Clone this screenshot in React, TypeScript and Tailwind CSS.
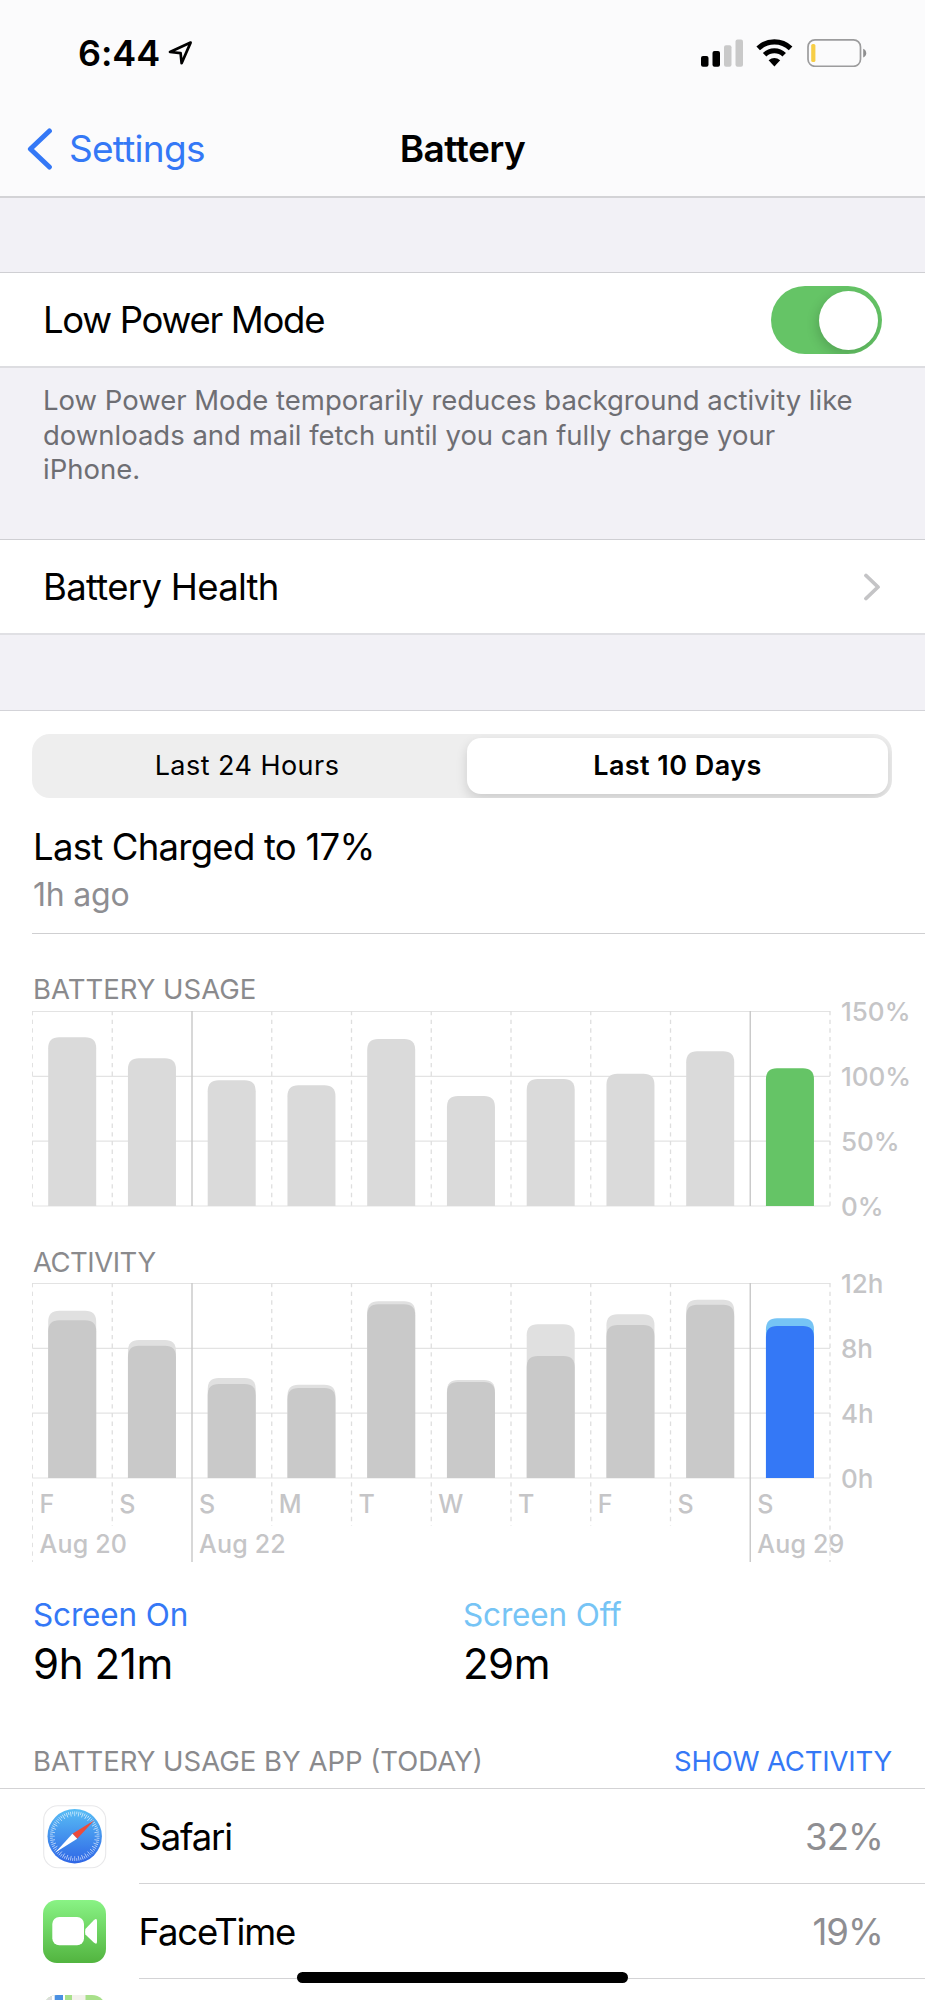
import type { ReactNode } from "react";

type Day = { label: string; date?: string; usage: number; total: number; on: number };

// usage, total and on are bar heights inside the 195px plot
const days: Day[] = [
  { label: "F", date: "Aug 20", usage: 168.7, total: 167.3, on: 157.7 },
  { label: "S", usage: 147.7, total: 138, on: 132.3 },
  { label: "S", date: "Aug 22", usage: 125.7, total: 100, on: 94 },
  { label: "M", usage: 120.7, total: 93.3, on: 90 },
  { label: "T", usage: 167, total: 176.7, on: 173.7 },
  { label: "W", usage: 110, total: 98, on: 96 },
  { label: "T", usage: 127, total: 153.7, on: 122 },
  { label: "F", usage: 132.3, total: 163.7, on: 153 },
  { label: "S", usage: 154.7, total: 178.3, on: 173.3 },
  { label: "S", date: "Aug 29", usage: 137.7, total: 159.7, on: 152 },
];

const PLOT = 194.5;
const STEP = 79.75;

function barPath(i: number, height: number) {
  const x = i * STEP + 16.2;
  const w = 48;
  const y = PLOT + 0.5 - height;
  return `M${x} ${PLOT + 0.5}V${y + 11}Q${x} ${y} ${x + 11} ${y}H${x + w - 11}Q${x + w} ${y} ${x + w} ${y + 11}V${PLOT + 0.5}Z`;
}

function Plot({ height, dayEnd, weekEnd, children }: { height: number; dayEnd: number; weekEnd: number; children: ReactNode }) {
  return (
    <svg className="block" width="800" height={height} viewBox={`0 0 800 ${height}`} fill="none">
      {[0, 1, 2, 3].map((n) => (
        <path key={n} d={`M0.3 ${0.5 + (n * PLOT) / 3}H798`} stroke="#e3e3e3" strokeWidth="1.2" />
      ))}
      {Array.from({ length: 11 }, (_, i) => {
        const x = i * STEP + 0.5;
        const week = i === 2 || i === 9;
        const end = week || i === 0 || i === 10 ? weekEnd : dayEnd;
        return week ? (
          <path key={i} d={`M${x} 0V${end}`} stroke="#c8c8c8" strokeWidth="1.4" />
        ) : (
          <path key={i} d={`M${x} 0V${end}`} stroke="#dedede" strokeWidth={i === 0 ? 0.9 : 1.3} strokeDasharray="4.33 4.33" />
        );
      })}
      {children}
    </svg>
  );
}

function Axis({ labels }: { labels: string[] }) {
  return (
    <div className="-mt-[14px] ml-[9px] flex h-[225px] flex-col justify-between">
      {labels.map((l) => (
        <span key={l} className="h-[30px] text-[26px] leading-[30px] font-medium whitespace-nowrap text-[#c5c5c7]">{l}</span>
      ))}
    </div>
  );
}

function StatusBar() {
  return (
    <div className="flex h-[105px] items-center pr-[58px] pl-[78px]">
      <span className="text-[36px] leading-[44px] font-semibold tracking-[-0.1px]">6:44</span>
      <svg className="ml-[8px]" width="25" height="26" viewBox="0 0 25 26" fill="none">
        <path d="M22.6 2.6L2 12L12.6 13.2L13.6 23.2Z" stroke="#000" strokeWidth="2.7" strokeLinejoin="round" />
      </svg>
      <div className="flex-1" />
      <svg width="43" height="28" viewBox="0 0 43 28">
        <rect x="0" y="17" width="7.5" height="10.7" rx="2" />
        <rect x="11.5" y="12" width="7.5" height="15.7" rx="2" />
        <rect x="23" y="6.3" width="7.5" height="21.4" rx="2" fill="#c9c9c9" />
        <rect x="34.5" y="0.6" width="7.5" height="27.1" rx="2" fill="#c9c9c9" />
      </svg>
      <svg className="ml-[12px]" width="37" height="28" viewBox="0 0 37 28" fill="none">
        <path d="M2.2 9.3A23.5 23.5 0 0 1 34.6 9.3" stroke="#000" strokeWidth="5.2" />
        <path d="M8.6 15.8A14 14 0 0 1 28.2 15.8" stroke="#000" strokeWidth="5" />
        <path d="M12.6 21.2Q18.4 16.6 24.2 21.2L18.4 27.4Z" fill="#000" />
      </svg>
      <svg className="ml-[14px]" width="60" height="28" viewBox="0 0 60 28" fill="none">
        <rect x="1" y="0.9" width="52.5" height="26.4" rx="7" stroke="#9c9c9d" strokeWidth="1.7" />
        <rect x="4.2" y="5" width="4.2" height="18" rx="1.6" fill="#f7ce46" />
        <path d="M56.2 9.8Q59.2 11.2 59.2 14.2T56.2 18.6Z" fill="#8f8f90" />
      </svg>
    </div>
  );
}

function SafariIcon() {
  return (
    <svg width="64" height="64" viewBox="0 0 64 64">
      <defs>
        <linearGradient id="safari" x1="0" y1="0" x2="0" y2="1">
          <stop offset="0" stopColor="#58bdf5" />
          <stop offset="1" stopColor="#2f66e6" />
        </linearGradient>
      </defs>
      <rect x="0.7" y="0.7" width="62" height="62" rx="14" fill="#fff" stroke="#e8e8ea" strokeWidth="1.1" />
      <circle cx="31.7" cy="31.2" r="27.2" fill="url(#safari)" />
      {Array.from({ length: 72 }, (_, i) => (
        <path key={i} d={i % 2 ? "M31.7 6.4V9.2" : "M31.7 6.4V11.2"} stroke="#fff" strokeOpacity="0.7" strokeWidth="0.8" transform={`rotate(${i * 5} 31.7 31.2)`} />
      ))}
      <path d="M51.3 15.2L34.2 33.7L29.4 28.7Z" fill="#ec4b3c" />
      <path d="M12.3 47.5L29.4 28.7L34.2 33.7Z" fill="#fff" />
    </svg>
  );
}

function FaceTimeIcon() {
  return (
    <svg width="64" height="64" viewBox="0 0 64 64">
      <defs>
        <linearGradient id="facetime" x1="0" y1="0" x2="0" y2="1">
          <stop offset="0" stopColor="#89f385" />
          <stop offset="1" stopColor="#52b43f" />
        </linearGradient>
      </defs>
      <rect width="63" height="63" rx="14" fill="url(#facetime)" />
      <rect x="9.3" y="17" width="31.7" height="28.3" rx="7" fill="#fff" />
      <path d="M42.4 29L50.8 20.2Q54 17.6 54 21V41.7Q54 45.2 50.8 42.6L42.4 34.4Q41.8 31.7 42.4 29Z" fill="#fff" />
    </svg>
  );
}

function MapsIcon() {
  return (
    <svg width="64" height="64" viewBox="0 0 64 64">
      <clipPath id="maps"><rect width="63" height="63" rx="14" /></clipPath>
      <g clipPath="url(#maps)">
        <rect width="64" height="64" fill="#a8e08a" />
        <rect width="12" height="64" fill="#dcdcdc" />
        <rect x="9" width="13" height="64" fill="#fff" />
        <rect x="11.7" width="8.3" height="64" fill="#4a90e2" />
        <rect x="29" width="13.5" height="64" fill="#f3f1ec" />
      </g>
    </svg>
  );
}

function AppRow({ icon, name, value }: { icon: ReactNode; name: string; value: string }) {
  return (
    <div className="flex h-[95px] pl-[43px]">
      <div className="mt-4 w-[64px]">{icon}</div>
      <div className="ml-[31.5px] flex flex-1 items-center justify-between border-b border-[#d3d3d5] pt-px pr-[42px] text-[36.5px] leading-[44px] tracking-[-1.2px]">
        <span>{name}</span>
        <span className="tracking-[-0.9px] text-[#8e8e92]">{value}</span>
      </div>
    </div>
  );
}

export default function App() {
  return (
    <main className="relative flex h-[2000px] w-[925px] flex-col overflow-hidden bg-[#f2f1f6] font-['Inter',sans-serif] text-black">
      <header className="h-[198px] shrink-0 border-b-2 border-[#d3d3d6] bg-[#fbfbfc]">
        <StatusBar />
        <div className="grid h-[88px] grid-cols-3 items-center">
          <div className="flex items-center pl-[27px] text-[#3478f6]">
            <svg width="26" height="42" viewBox="0 0 26 42" fill="none">
              <path d="M22.4 3L3.4 21L22.4 39" stroke="currentColor" strokeWidth="5" strokeLinecap="round" strokeLinejoin="round" />
            </svg>
            <span className="ml-[16px] text-[37px] leading-[44px] tracking-[-0.75px]">Settings</span>
          </div>
          <span className="text-center text-[37px] leading-[44px] font-semibold tracking-[-0.5px]">Battery</span>
        </div>
      </header>

      <section className="mt-[74px] flex h-[96px] shrink-0 items-center justify-between border-t border-b-2 border-t-[#cfcfd3] border-b-[#dddde1] bg-white pt-px pr-[43px] pl-[43px]">
        <span className="text-[36.5px] leading-[44px] tracking-[-1.3px]">Low Power Mode</span>
        <div className="flex h-[68px] w-[111px] items-center justify-end overflow-hidden rounded-full bg-[#65c466] pr-[4px]">
          <div className="size-[59px] rounded-full bg-white shadow-[-2px_4px_12px_rgba(0,0,0,0.16)]" />
        </div>
      </section>
      <p className="mt-[15px] h-[156px] shrink-0 pr-[40px] pl-[43px] text-[27.5px] leading-[34.7px] tracking-[-0.01px] text-[#6e6e73]">
        Low Power Mode temporarily reduces background activity like<br />
        downloads and mail fetch until you can fully charge your<br />
        iPhone.
      </p>

      <section className="flex h-[96px] shrink-0 items-center justify-between border-t border-b-2 border-t-[#cfcfd3] border-b-[#e0e0e4] bg-white pt-px pr-[44px] pl-[43px]">
        <span className="text-[36.5px] leading-[44px] tracking-[-0.7px]">Battery Health</span>
        <svg width="18" height="28" viewBox="0 0 18 28" fill="none">
          <path d="M3 2.5L15 14L3 25.5" stroke="#c4c4c6" strokeWidth="3.8" strokeLinecap="round" strokeLinejoin="round" />
        </svg>
      </section>

      <section className="mt-[75px] shrink-0 border-t border-[#d3d3d8] bg-white">
        <div className="mt-[23px] ml-[32px] flex h-[64px] w-[860px] overflow-hidden rounded-[18px] bg-[#eeeeee] p-1 text-[27px] tracking-[0.45px]">
          <div className="flex w-[431px] items-center justify-center pt-px pr-[9px]">Last 24 Hours</div>
          <div className="flex w-[421px] items-center justify-center rounded-[14px] bg-white pt-px font-semibold shadow-[0_5px_12px_rgba(0,0,0,0.14)]">Last 10 Days</div>
        </div>

        <div className="ml-[32px] flex h-[136px] flex-col border-b border-[#cfcfd1] pt-[27px] pl-px">
          <span className="text-[36.5px] leading-[44px] tracking-[-0.75px]">Last Charged to 17%</span>
          <span className="mt-[6px] text-[32px] leading-[40px] tracking-[-0.2px] text-[#8e8e92]">1h ago</span>
        </div>

        <div className="mt-[38px] ml-[33px] h-[39px] text-[27.5px] leading-[34px] text-[#8a8a8d]">BATTERY USAGE</div>
        <div className="ml-[32px] flex h-[196px]">
          <Plot height={196} dayEnd={195} weekEnd={195}>
            {days.map((d, i) => (
              <path key={i} d={barPath(i, d.usage)} fill={i === 9 ? "#65c466" : "#dadada"} />
            ))}
          </Plot>
          <Axis labels={["150%", "100%", "50%", "0%"]} />
        </div>

        <div className="mt-[38px] ml-[33px] h-[38px] text-[27.5px] leading-[34px] tracking-[-0.5px] text-[#8a8a8d]">ACTIVITY</div>
        <div className="relative ml-[32px] flex h-[280px]">
          <Plot height={280} dayEnd={243} weekEnd={279}>
            {days.map((d, i) => (
              <g key={i}>
                <path d={barPath(i, d.total)} fill={i === 9 ? "#76c4f5" : "#e0e0e0"} />
                <path d={barPath(i, d.on)} fill={i === 9 ? "#3478f6" : "#c9c9c9"} />
              </g>
            ))}
          </Plot>
          <Axis labels={["12h", "8h", "4h", "0h"]} />
          <div className="absolute top-[205px] left-0 grid w-[797.5px] grid-cols-10 text-[25px] leading-[32px] font-medium tracking-[0.2px] whitespace-nowrap text-[#c5c5c7]">
            {days.map((d, i) => (
              <div key={i} className="min-w-0 pl-[7.5px]">
                <div>{d.label}</div>
                <div className="mt-2">{d.date}</div>
              </div>
            ))}
          </div>
        </div>

        <div className="mt-[32px] ml-[32px] grid w-[860px] grid-cols-2">
          <div className="flex flex-col pl-px">
            <span className="text-[31.5px] leading-[40px] tracking-[-0.15px] text-[#3478f6]">Screen On</span>
            <span className="mt-[3px] text-[42px] leading-[52px] tracking-[-0.4px]">9h 21m</span>
          </div>
          <div className="flex flex-col pl-px">
            <span className="text-[31.5px] leading-[40px] tracking-[-0.15px] text-[#76c4f5]">Screen Off</span>
            <span className="mt-[3px] text-[42px] leading-[52px] tracking-[-0.5px]">29m</span>
          </div>
        </div>

        <div className="mt-[53px] flex h-[46px] justify-between border-b border-[#d3d3d5] px-[33px] pt-px text-[27.5px] leading-[34px]">
          <span className="text-[#8a8a8d]">BATTERY USAGE BY APP (TODAY)</span>
          <span className="tracking-[-0.2px] text-[#3478f6]">SHOW ACTIVITY</span>
        </div>
        <AppRow icon={<SafariIcon />} name="Safari" value="32%" />
        <AppRow icon={<FaceTimeIcon />} name="FaceTime" value="19%" />
        <div className="mt-4 ml-[43px]"><MapsIcon /></div>
      </section>

      <div className="absolute top-[1972px] left-[297px] h-[11px] w-[331px] rounded-full bg-black" />
    </main>
  );
}
